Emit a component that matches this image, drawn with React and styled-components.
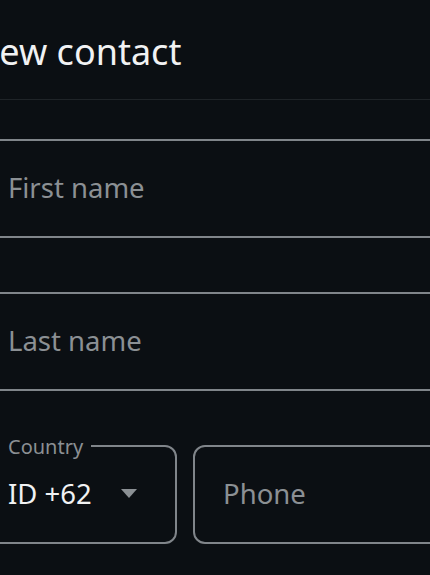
import React from "react";
import styled, { createGlobalStyle } from "styled-components";

const GlobalStyle = createGlobalStyle`
  html, body {
    margin: 0;
    padding: 0;
    background: #0b0f13;
    overflow: hidden;
  }
  body {
    font-family: "Noto Sans", "Open Sans", sans-serif;
  }
`;

const Screen = styled.div`
  width: 490px;
  height: 575px;
  margin-left: -32px;
  background: #0b0f13;
  color: #f1f2f3;
`;

const Header = styled.header`
  height: 100px;
  border-bottom: 1px solid #1f2428;
  box-sizing: border-box;
  display: flex;
  align-items: flex-start;
  padding: 27px 0 0 4px;
`;

const Title = styled.h1`
  margin: 0;
  font-size: 36px;
  font-weight: 400;
  line-height: 50px;
  color: #f1f2f3;
`;

const Form = styled.form`
  display: flex;
  flex-direction: column;
  gap: 54px;
  padding: 39px 0 0 16px;
`;

const Field = styled.div`
  position: relative;
  height: 99px;
  box-sizing: border-box;
  border: 2px solid #80858a;
  border-radius: 12px;
  display: flex;
  align-items: center;
  padding-left: ${(p) => p.$pad || 22}px;
  flex: ${(p) => (p.$grow ? 1 : "none")};
  width: ${(p) => (p.$width ? `${p.$width}px` : "auto")};
`;

const Placeholder = styled.span`
  font-size: 27.5px;
  color: #8b9094;
  line-height: 1;
  padding-bottom: 2px;
`;

const Value = styled.span`
  font-size: 27.5px;
  color: #f1f2f3;
  line-height: 1;
  padding-bottom: 2px;
`;

const FloatLabel = styled.span`
  position: absolute;
  top: -12px;
  left: 10px;
  padding: 0 8px 0 12px;
  background: #0b0f13;
  font-size: 20px;
  line-height: 24px;
  color: #8b9094;
`;

const PhoneRow = styled.div`
  display: flex;
  gap: 16px;
`;

const Caret = styled.svg`
  margin-left: 29px;
  margin-bottom: 2px;
`;

export default function App() {
  return (
    <>
      <GlobalStyle />
      <Screen>
        <Header>
          <Title>New contact</Title>
        </Header>
        <Form>
          <Field>
            <Placeholder>First name</Placeholder>
          </Field>
          <Field>
            <Placeholder>Last name</Placeholder>
          </Field>
          <PhoneRow>
            <Field $width={193}>
              <FloatLabel>Country</FloatLabel>
              <Value>ID +62</Value>
              <Caret width="16" height="9" viewBox="0 0 16 9">
                <path d="M0 0 H16 L8 9 Z" fill="#8b9094" />
              </Caret>
            </Field>
            <Field $grow $pad={28}>
              <Placeholder>Phone</Placeholder>
            </Field>
          </PhoneRow>
        </Form>
      </Screen>
    </>
  );
}
